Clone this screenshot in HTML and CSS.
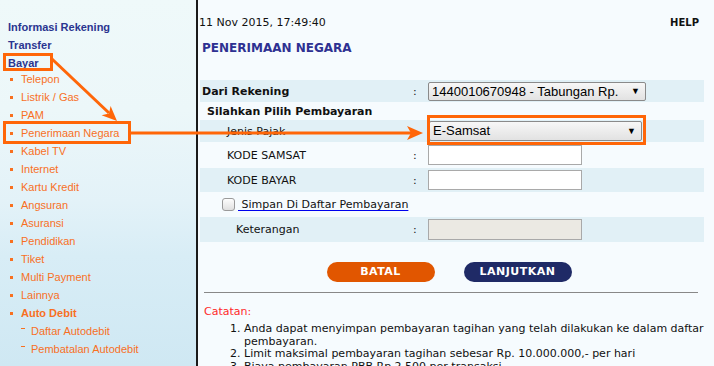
FILE: index.html
```html
<!DOCTYPE html>
<html lang="id">
<head>
    <meta charset="UTF-8">
    <title>Penerimaan Negara</title>
    <link rel="stylesheet" href="styles.css">
</head>
<body>
    <div class="page">
        <div class="sidebar">
            <div class="menu-head">Informasi Rekening</div>
            <div class="menu-head">Transfer</div>
            <div class="menu-head">Bayar</div>
            <ul class="menu">
                <li>Telepon</li>
                <li>Listrik / Gas</li>
                <li>PAM</li>
                <li>Penerimaan Negara</li>
                <li>Kabel TV</li>
                <li>Internet</li>
                <li>Kartu Kredit</li>
                <li>Angsuran</li>
                <li>Asuransi</li>
                <li>Pendidikan</li>
                <li>Tiket</li>
                <li>Multi Payment</li>
                <li>Lainnya</li>
                <li class="bold">Auto Debit</li>
            </ul>
            <ul class="submenu">
                <li>Daftar Autodebit</li>
                <li>Pembatalan Autodebit</li>
            </ul>
        </div>

        <div class="main">
            <div class="topbar">
                <span class="date">11 Nov 2015, 17:49:40</span>
                <span class="help">HELP</span>
            </div>
            <h1 class="title">PENERIMAAN NEGARA</h1>

            <div class="form">
                <div class="row shade h22">
                    <div class="label strong">Dari Rekening</div>
                    <div class="colon">:</div>
                    <div class="field"><div class="select wide">1440010670948 - Tabungan Rp.<span class="arrow">&#9660;</span></div></div>
                </div>
                <div class="row h18">
                    <div class="label strong sub">Silahkan Pilih Pembayaran</div>
                </div>
                <div class="row shade h22">
                    <div class="label indent">Jenis Pajak</div>
                    <div class="colon">:</div>
                    <div class="field"><div class="select narrow">E-Samsat<span class="arrow">&#9660;</span></div></div>
                </div>
                <div class="row h26">
                    <div class="label indent">KODE SAMSAT</div>
                    <div class="colon">:</div>
                    <div class="field"><div class="input"></div></div>
                </div>
                <div class="row shade h24">
                    <div class="label indent">KODE BAYAR</div>
                    <div class="colon">:</div>
                    <div class="field"><div class="input"></div></div>
                </div>
                <div class="row h25">
                    <div class="check-line">
                        <span class="checkbox"></span>
                        <span class="save-link">&nbsp;Simpan Di Daftar Pembayaran</span>
                    </div>
                </div>
                <div class="row shade h25">
                    <div class="label indent2">Keterangan</div>
                    <div class="colon">:</div>
                    <div class="field"><div class="input disabled"></div></div>
                </div>
            </div>

            <div class="buttons">
                <span class="btn btn-cancel">BATAL</span>
                <span class="btn btn-next">LANJUTKAN</span>
            </div>
            <hr class="divider">

            <div class="notes">
                <div class="notes-title">Catatan:</div>
                <ol>
                    <li>Anda dapat menyimpan pembayaran tagihan yang telah dilakukan ke dalam daftar pembayaran.</li>
                    <li>Limit maksimal pembayaran tagihan sebesar Rp. 10.000.000,- per hari</li>
                    <li>Biaya pembayaran PBB Rp 2.500 per transaksi</li>
                </ol>
            </div>
        </div>
    </div>

    <svg class="marks" width="714" height="366" viewBox="0 0 714 366">
        <g fill="none" stroke="#ff6608" stroke-width="3">
            <rect x="4.5" y="54.5" width="47" height="15"/>
            <rect x="4.5" y="122.5" width="125" height="20"/>
            <rect x="428.5" y="116.5" width="216" height="27"/>
            <line x1="52" y1="59" x2="109" y2="113"/>
            <line x1="131" y1="133" x2="411" y2="133"/>
        </g>
        <g fill="#ff6608">
            <polygon points="117,121 101.6,115.3 109,113.4 110.6,105.9"/>
            <polygon points="423,133 407,126 411,133 407,140"/>
        </g>
    </svg>
</body>
</html>
```

FILE: styles.css
```css
body {
    margin: 0;
    background: #f6fbfe;
    width: 714px;
    height: 366px;
    overflow: hidden;
    position: relative;
}

.page {
    display: flex;
    height: 366px;
}

/* left menu */
.sidebar {
    width: 196px;
    flex-shrink: 0;
    border-right: 2px solid #1a1a1a;
    background: linear-gradient(#eff9fa 0%, #ecf7f9 30%, #e3f2f8 55%, #d8edf6 70%, #cfe8f3 100%);
    font-family: "Liberation Sans", Arial, sans-serif;
    padding-top: 18px;
}

.menu-head {
    font-size: 11px;
    font-weight: bold;
    color: #2a3590;
    padding-left: 8px;
    line-height: 18px;
}

.menu,
.submenu {
    list-style: none;
    margin: 0;
    padding: 0;
}

.menu {
    margin-top: -2px;
}

.menu li,
.submenu li {
    position: relative;
    font-size: 11px;
    color: #f8701f;
    line-height: 18px;
    padding-left: 21px;
}

.menu li.bold {
    font-weight: bold;
}

.menu li::before {
    content: "";
    position: absolute;
    left: 10px;
    top: 8px;
    width: 3px;
    height: 3px;
    background: #f8701f;
}

.submenu li {
    padding-left: 31px;
}

.submenu li::before {
    content: "";
    position: absolute;
    left: 21px;
    top: 6px;
    width: 4px;
    height: 1px;
    background: #f8701f;
}

/* main area */
.main {
    flex: 1;
    padding: 0 14px 0 2px;
    font-family: "DejaVu Sans", Verdana, sans-serif;
    color: #111;
}

.topbar {
    display: flex;
    justify-content: space-between;
    align-items: center;
    padding-top: 15px;
    height: 15px;
}

.date {
    font-size: 11px;
    margin-left: -1px;
}

.help {
    font-size: 10px;
    font-weight: bold;
    padding-right: 5px;
}

.title {
    font-size: 12px;
    color: #2e3192;
    margin: 11px 0 0 2px;
    line-height: 14px;
}

.form {
    margin-top: 25px;
    font-size: 11px;
}

.row {
    display: grid;
    grid-template-columns: 213px 14px 1fr;
    align-items: center;
}

.row.shade {
    background: #e1f0f6;
}

.h18 { height: 18px; }
.h22 { height: 22px; }
.h24 { height: 24px; }
.h25 { height: 25px; }
.h26 { height: 26px; }

.label {
    padding-left: 2px;
}

.label.strong {
    font-weight: bold;
}

.label.sub {
    padding-left: 7px;
    grid-column: 1 / 4;
}

.label.indent {
    padding-left: 27px;
}

.label.indent2 {
    padding-left: 36px;
}

.select {
    position: relative;
    box-sizing: border-box;
    font-family: "Liberation Sans", Arial, sans-serif;
    font-size: 13px;
    border: 1px solid #8a8a8a;
    border-radius: 2px;
    background: linear-gradient(#f7f7f7, #e2e2e2);
    padding-left: 3px;
    color: #000;
}

.select.wide {
    width: 218px;
    height: 19px;
    line-height: 17px;
    margin-left: 1px;
}

.select.narrow {
    width: 213px;
    height: 20px;
    line-height: 18px;
    margin-left: 2px;
}

.arrow {
    position: absolute;
    right: 5px;
    top: 0;
    font-size: 9px;
}

.input {
    width: 154px;
    height: 20px;
    box-sizing: border-box;
    border: 1px solid #a9a9a9;
    background: #fff;
    margin-left: 1px;
}

.input.disabled {
    height: 21px;
    background: #ebe9e3;
}

.check-line {
    grid-column: 1 / 4;
    display: flex;
    align-items: center;
    padding-left: 22px;
}

.checkbox {
    width: 11px;
    height: 11px;
    border: 1px solid #9a9a9a;
    border-radius: 3px;
    background: linear-gradient(#fdfdfd, #e0e0e0);
    margin-right: 3px;
}

.save-link {
    color: #111;
    text-decoration: underline;
    text-decoration-color: #0000ee;
    text-underline-offset: 2px;
}

.buttons {
    display: flex;
    justify-content: center;
    gap: 29px;
    margin-top: 20px;
    padding-right: 6px;
}

.btn {
    width: 108px;
    height: 20px;
    line-height: 20px;
    border-radius: 10px;
    text-align: center;
    color: #fff;
    font-weight: bold;
    font-size: 11px;
    letter-spacing: 0.5px;
}

.btn-cancel {
    background: #e15600;
}

.btn-next {
    background: #1f2a66;
}

.divider {
    border: 0;
    border-top: 1px solid #888;
    margin: 10px 0 0 4px;
    width: 494px;
}

.notes {
    font-size: 11px;
    margin-top: 12px;
    padding-left: 4px;
}

.notes-title {
    color: #ff2a2a;
    line-height: 14px;
}

.notes ol {
    margin: 4px 0 0;
    padding-left: 40px;
    line-height: 12.7px;
    width: 460px;
}

.marks {
    position: absolute;
    top: 0;
    left: 0;
    pointer-events: none;
}
```
